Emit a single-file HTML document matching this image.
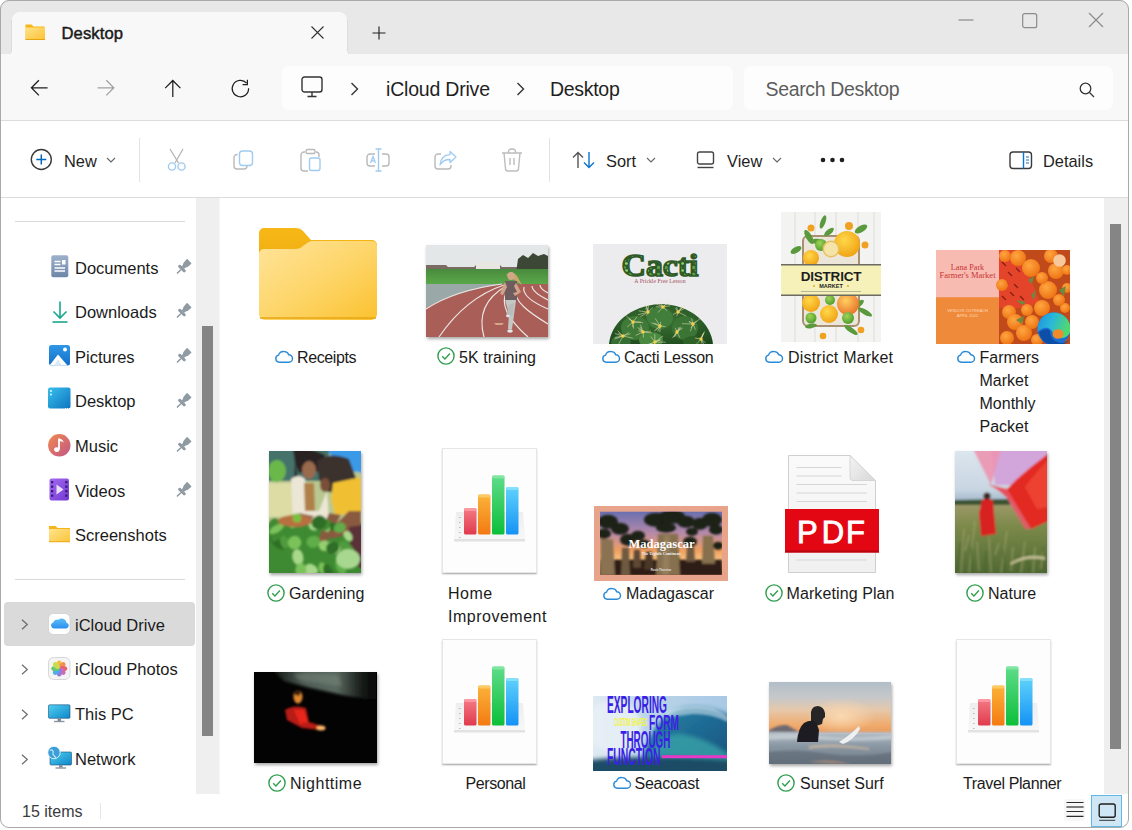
<!DOCTYPE html>
<html><head><meta charset="utf-8">
<style>
html,body{margin:0;padding:0;background:#fff;width:1132px;height:830px;overflow:hidden}
*{box-sizing:border-box}
body{font-family:"Liberation Sans",sans-serif;color:#1b1b1b;position:relative}
.a{position:absolute}
.t{position:absolute;white-space:nowrap;line-height:1}
svg{position:absolute;overflow:visible}
#win{position:absolute;left:0;top:0;width:1129px;height:828px;border-radius:9px;overflow:hidden;background:#fff}
#frame{position:absolute;left:0;top:0;width:1129px;height:828px;border:1px solid #a9a9a9;border-radius:9px;pointer-events:none}
.lbl{position:absolute;font-size:16px;line-height:23px;white-space:nowrap;color:#1b1b1b}
.sb{position:absolute;font-size:16.5px;line-height:1;white-space:nowrap;color:#1b1b1b;left:75px}
.thumb{position:absolute;overflow:hidden}
.shadow{box-shadow:1px 2px 3px rgba(0,0,0,.35)}
</style></head><body>
<div id="win">
<!-- ============ TITLE BAR ============ -->
<div class="a" style="left:0px;top:0px;width:1129px;height:55px;background:#f8f8f8"></div>
<div class="a" style="left:0px;top:0px;width:1129px;height:22px;background:#e8e8e8"></div>
<div class="a" style="left:0px;top:20px;width:12px;height:35px;background:#e8e8e8;border-right:1px solid #dcdcdc;border-bottom:1px solid #dadada;border-bottom-right-radius:5px"></div>
<div class="a" style="left:347px;top:20px;width:782px;height:35px;background:#e8e8e8;border-left:1px solid #dcdcdc;border-bottom:1px solid #dadada;border-bottom-left-radius:5px"></div>
<div class="a" style="left:12px;top:12px;width:335px;height:43px;background:#f8f8f8;border-radius:8px 8px 0 0"></div>
<!-- tab folder icon -->
<svg style="left:24px;top:23px" width="22" height="18" viewBox="0 0 22 18">
 <defs><linearGradient id="tf" x1="0" y1="0" x2="1" y2="1"><stop offset="0" stop-color="#ffe28a"/><stop offset="1" stop-color="#fcc235"/></linearGradient></defs>
 <path d="M1.5 1.5h6l2 2h11v13h-19z" fill="#f6b716"/>
 <rect x="1.5" y="4.5" width="19.5" height="12" rx="1" fill="url(#tf)"/>
 <rect x="1.5" y="16" width="19.5" height="1" fill="#e8a40c"/>
</svg>
<div class="t" style="left:61.5px;top:26px;font-size:16.6px;-webkit-text-stroke:0.45px #1a1a1a;color:#1a1a1a;letter-spacing:0.1px">Desktop</div>
<!-- tab close -->
<svg style="left:311px;top:26px" width="13" height="13"><path d="M0.5 0.5L12.5 12.5M12.5 0.5L0.5 12.5" stroke="#333" stroke-width="1.1"/></svg>
<!-- plus -->
<svg style="left:372px;top:26px" width="14" height="14"><path d="M7 0.5V13.5M0.5 7H13.5" stroke="#222" stroke-width="1.15"/></svg>
<!-- window controls -->
<svg style="left:958px;top:19px" width="16" height="2"><path d="M0.5 1H15.5" stroke="#8b8b8b" stroke-width="1.2"/></svg>
<svg style="left:1022px;top:13px" width="16" height="16"><rect x="0.7" y="0.7" width="14" height="14" rx="2" fill="none" stroke="#8b8b8b" stroke-width="1.2"/></svg>
<svg style="left:1088px;top:12px" width="16" height="16"><path d="M1 1L15 15M15 1L1 15" stroke="#8b8b8b" stroke-width="1.2"/></svg>

<!-- ============ ADDRESS ROW ============ -->
<div class="a" style="left:0px;top:54px;width:1129px;height:66px;background:#f8f8f8"></div>
<svg style="left:30px;top:79px" width="19" height="18" viewBox="0 0 19 18"><path d="M17.6 8.8H1.4M8.9 1.2L1.4 8.8L8.9 16.4" fill="none" stroke="#1f1f1f" stroke-width="1.25"/></svg>
<svg style="left:97px;top:79px" width="19" height="18" viewBox="0 0 19 18"><path d="M0.6 8.8H16.8M9.3 1.2L16.8 8.8L9.3 16.4" fill="none" stroke="#a0a0a0" stroke-width="1.25"/></svg>
<svg style="left:164px;top:79px" width="19" height="19" viewBox="0 0 19 19"><path d="M8.8 18V1.5M1.2 9.1L8.8 1.5L16.4 9.1" fill="none" stroke="#1f1f1f" stroke-width="1.25"/></svg>
<svg style="left:231px;top:79px" width="19" height="19" viewBox="0 0 19 19"><path d="M15.6 4.2A8.2 8.2 0 1 0 17.6 9.2" fill="none" stroke="#1f1f1f" stroke-width="1.25"/><path d="M11.6 5.6H16.4V0.8" fill="none" stroke="#1f1f1f" stroke-width="1.25"/></svg>
<div class="a" style="left:282px;top:66px;width:451px;height:44px;background:#fdfdfd;border-radius:7px"></div>
<svg style="left:301px;top:76px" width="22" height="22" viewBox="0 0 22 22"><rect x="1" y="1" width="20" height="15" rx="2.5" fill="none" stroke="#333" stroke-width="1.4"/><path d="M11 16v4M6.5 20.5h9" stroke="#333" stroke-width="1.4"/></svg>
<svg style="left:350px;top:82px" width="9" height="14" viewBox="0 0 9 14"><path d="M1.5 1L7.5 7L1.5 13" fill="none" stroke="#333" stroke-width="1.4"/></svg>
<div class="t" style="left:386px;top:80.2px;font-size:19.5px;color:#1f1f1f;letter-spacing:-0.2px">iCloud Drive</div>
<svg style="left:516px;top:82px" width="9" height="14" viewBox="0 0 9 14"><path d="M1.5 1L7.5 7L1.5 13" fill="none" stroke="#333" stroke-width="1.4"/></svg>
<div class="t" style="left:550px;top:80.2px;font-size:19.5px;color:#1f1f1f;letter-spacing:-0.3px">Desktop</div>
<div class="a" style="left:744px;top:66px;width:369px;height:44px;background:#fdfdfd;border-radius:7px"></div>
<div class="t" style="left:765.5px;top:80.3px;font-size:19.5px;color:#5d5d5d;letter-spacing:-0.35px">Search Desktop</div>
<svg style="left:1079px;top:82px" width="16" height="16" viewBox="0 0 16 16"><circle cx="6.5" cy="6.5" r="5.3" fill="none" stroke="#333" stroke-width="1.3"/><path d="M10.5 10.5L15 15" stroke="#333" stroke-width="1.3"/></svg>

<!-- ============ COMMAND BAR ============ -->
<div class="a" style="left:0px;top:120px;width:1129px;height:1px;background:#dcdcdc"></div>
<div class="a" style="left:0px;top:121px;width:1129px;height:76px;background:#ffffff"></div>
<div class="a" style="left:0px;top:197px;width:1129px;height:1px;background:#dcdcdc"></div>
<svg style="left:30px;top:148px" width="23" height="23" viewBox="0 0 23 23"><circle cx="11.3" cy="11.5" r="10" fill="none" stroke="#3a3a3a" stroke-width="1.4"/><path d="M11.3 6.5v10M6.3 11.5h10" stroke="#0067c0" stroke-width="1.5"/></svg>
<div class="t" style="left:64px;top:152.6px;font-size:16.4px;color:#1f1f1f">New</div>
<svg style="left:106px;top:157px" width="10" height="6" viewBox="0 0 10 6"><path d="M1 1L5 5L9 1" fill="none" stroke="#666" stroke-width="1.1"/></svg>
<div class="a" style="left:139px;top:138px;width:1px;height:44px;background:#e3e3e3"></div>
<!-- scissors -->
<svg style="left:166px;top:148px" width="22" height="24" viewBox="0 0 22 24"><path d="M4 1L12.5 15M17 1L9 15" stroke="#b5b5b5" stroke-width="1.3" fill="none"/><circle cx="6" cy="18.5" r="3.6" fill="none" stroke="#9fcbf0" stroke-width="1.4"/><circle cx="15.5" cy="18.5" r="3.6" fill="none" stroke="#9fcbf0" stroke-width="1.4"/></svg>
<!-- copy -->
<svg style="left:233px;top:150px" width="22" height="22" viewBox="0 0 22 22"><path d="M4.5 4.5H4A3 3 0 0 0 1 7.5V16A3 3 0 0 0 4 19H11A3 3 0 0 0 14 16" fill="none" stroke="#b9b9b9" stroke-width="1.4"/><rect x="6.5" y="1" width="13" height="14.5" rx="3" fill="none" stroke="#9fcbf0" stroke-width="1.4"/></svg>
<!-- paste -->
<svg style="left:300px;top:148px" width="22" height="24" viewBox="0 0 22 24"><path d="M5 4H4A3 3 0 0 0 1 7V20A3 3 0 0 0 4 23H8" fill="none" stroke="#b9b9b9" stroke-width="1.4"/><path d="M16 4H16A3 3 0 0 1 19 7V9" fill="none" stroke="#b9b9b9" stroke-width="1.4"/><rect x="6" y="1.5" width="9" height="4" rx="1.5" fill="none" stroke="#b9b9b9" stroke-width="1.4"/><rect x="9.5" y="10" width="10.5" height="12.5" rx="2" fill="none" stroke="#9fcbf0" stroke-width="1.4"/></svg>
<!-- rename -->
<svg style="left:366px;top:148px" width="24" height="24" viewBox="0 0 24 24"><path d="M9 6H4A3 3 0 0 0 1 9V15A3 3 0 0 0 4 18H9M16 6H20A3 3 0 0 1 23 9V15A3 3 0 0 1 20 18H16" fill="none" stroke="#b9b9b9" stroke-width="1.4"/><path d="M12.5 1V23M9.5 1H15.5M9.5 23H15.5" stroke="#9fcbf0" stroke-width="1.4"/><path d="M4.5 15L7 8.5L9.5 15M5.3 12.8H8.7" fill="none" stroke="#9fcbf0" stroke-width="1.3"/></svg>
<!-- share -->
<svg style="left:434px;top:150px" width="24" height="22" viewBox="0 0 24 22"><path d="M7 4H4A3 3 0 0 0 1 7V16A3 3 0 0 0 4 19H14A3 3 0 0 0 17 16V15" fill="none" stroke="#b9b9b9" stroke-width="1.4"/><path d="M16 1.5L22 7L16 12.5V9.5C11 9.5 8 11 6 15C6.5 9 10 5 16 4.7Z" fill="none" stroke="#9fcbf0" stroke-width="1.3" stroke-linejoin="round"/></svg>
<!-- delete -->
<svg style="left:501px;top:148px" width="22" height="24" viewBox="0 0 22 24"><path d="M1 5H21M7.5 5V3.5A2.5 2.5 0 0 1 10 1H12A2.5 2.5 0 0 1 14.5 3.5V5M3 5L4.5 20.5A2.5 2.5 0 0 0 7 23H15A2.5 2.5 0 0 0 17.5 20.5L19 5M9 10V17M13 10V17" fill="none" stroke="#bdbdbd" stroke-width="1.4"/></svg>
<div class="a" style="left:549px;top:138px;width:1px;height:44px;background:#e3e3e3"></div>
<!-- sort -->
<svg style="left:572px;top:151px" width="24" height="18" viewBox="0 0 24 18"><path d="M6 17V1.5M1 6.5L6 1.5L11 6.5" fill="none" stroke="#555" stroke-width="1.4"/><path d="M17 1V16.5M12 11.5L17 16.5L22 11.5" fill="none" stroke="#0a74d0" stroke-width="1.4"/></svg>
<div class="t" style="left:606px;top:152.6px;font-size:16.4px;color:#1f1f1f">Sort</div>
<svg style="left:646px;top:157px" width="10" height="6" viewBox="0 0 10 6"><path d="M1 1L5 5L9 1" fill="none" stroke="#666" stroke-width="1.1"/></svg>
<!-- view -->
<svg style="left:696px;top:151px" width="20" height="18" viewBox="0 0 20 18"><rect x="1.5" y="1" width="16" height="12" rx="2" fill="none" stroke="#444" stroke-width="1.4"/><path d="M1.5 16.5H17.5" stroke="#444" stroke-width="1.4"/></svg>
<div class="t" style="left:727px;top:152.6px;font-size:16.4px;color:#1f1f1f">View</div>
<svg style="left:772px;top:157px" width="10" height="6" viewBox="0 0 10 6"><path d="M1 1L5 5L9 1" fill="none" stroke="#666" stroke-width="1.1"/></svg>
<svg style="left:820px;top:157px" width="26" height="6" viewBox="0 0 26 6"><circle cx="3" cy="3" r="2.3" fill="#1f1f1f"/><circle cx="12.5" cy="3" r="2.3" fill="#1f1f1f"/><circle cx="22" cy="3" r="2.3" fill="#1f1f1f"/></svg>
<!-- details -->
<svg style="left:1009px;top:151px" width="24" height="19" viewBox="0 0 24 19"><rect x="1" y="1" width="21.5" height="16.5" rx="3" fill="none" stroke="#3a3a3a" stroke-width="1.4"/><path d="M14.5 1V17.5" stroke="#0a74d0" stroke-width="1.4"/><path d="M17 6H20M17 9H20M17 12H20" stroke="#0a74d0" stroke-width="1.2"/></svg>
<div class="t" style="left:1043px;top:152.6px;font-size:16.4px;color:#1f1f1f">Details</div>

<!-- ============ SIDEBAR ============ -->
<div class="a" style="left:-1px;top:198px;width:222px;height:597px;background:#fff"></div>
<div class="a" style="left:15px;top:221px;width:170px;height:1px;background:#d9d9d9"></div>
<!-- Documents -->
<svg style="left:51px;top:255px" width="18" height="23" viewBox="0 0 18 23"><defs><linearGradient id="dg" x1="0" y1="0" x2="0" y2="1"><stop offset="0" stop-color="#9db1cb"/><stop offset="1" stop-color="#6e87a7"/></linearGradient></defs><rect x="0.3" y="0.3" width="17" height="22" rx="2" fill="url(#dg)"/><path d="M3.5 6.5H9.5M3.5 9.5H9.5M3.5 13H14M3.5 16H14" stroke="#fff" stroke-width="1.3"/><rect x="11" y="5" width="3.5" height="4.5" fill="#fff"/></svg>
<div class="sb" style="top:259.5px">Documents</div>
<!-- Downloads -->
<svg style="left:52px;top:301px" width="16" height="22" viewBox="0 0 16 22"><path d="M8 0.5V17M1.5 10.5L8 17L14.5 10.5" fill="none" stroke="#17a88f" stroke-width="1.6"/><path d="M0.5 21H15.5" stroke="#17a88f" stroke-width="1.6"/></svg>
<div class="sb" style="top:303.8px">Downloads</div>
<!-- Pictures -->
<svg style="left:49px;top:345px" width="22" height="21" viewBox="0 0 22 21"><defs><linearGradient id="pg" x1="0" y1="0" x2="0" y2="1"><stop offset="0" stop-color="#2e97e6"/><stop offset="1" stop-color="#1470c9"/></linearGradient></defs><rect x="0" y="0" width="21" height="20.5" rx="2.5" fill="url(#pg)"/><path d="M0.5 20.5L9 9.5L18.5 20.5Z" fill="#fff"/><path d="M5 20.5L9 14.5L13 20.5Z" fill="#dce9f7"/><circle cx="16" cy="4.5" r="2" fill="#fff"/></svg>
<div class="sb" style="top:348.7px">Pictures</div>
<!-- Desktop -->
<svg style="left:48px;top:387px" width="23" height="22" viewBox="0 0 23 22"><defs><linearGradient id="dkg" x1="0" y1="0" x2="1" y2="1"><stop offset="0" stop-color="#39c0ec"/><stop offset="1" stop-color="#0d74bf"/></linearGradient></defs><rect x="0" y="0.5" width="22.5" height="21" rx="2" fill="url(#dkg)"/><circle cx="3" cy="4" r="0.9" fill="#fff"/><circle cx="3" cy="7.5" r="0.9" fill="#fff"/><path d="M17 21.5h5" stroke="#fff" stroke-width="0.8" stroke-dasharray="1 1"/></svg>
<div class="sb" style="top:393.3px">Desktop</div>
<!-- Music -->
<svg style="left:48px;top:434px" width="23" height="23" viewBox="0 0 23 23"><defs><linearGradient id="mg" x1="0" y1="0" x2="1" y2="1"><stop offset="0" stop-color="#f08a4c"/><stop offset="1" stop-color="#c2558a"/></linearGradient></defs><circle cx="11.3" cy="11.3" r="11.2" fill="url(#mg)"/><path d="M11 4.5V15.5" stroke="#fff" stroke-width="1.8"/><path d="M11 4.5C13 5 15.5 6 15.5 8.5C14.5 7.5 12.8 7.2 11 7.3Z" fill="#fff"/><ellipse cx="8.8" cy="15.6" rx="2.7" ry="2.3" fill="#fff"/></svg>
<div class="sb" style="top:438.0px">Music</div>
<!-- Videos -->
<svg style="left:49px;top:478px" width="21" height="23" viewBox="0 0 21 23"><defs><linearGradient id="vg" x1="0" y1="0" x2="1" y2="1"><stop offset="0" stop-color="#a36cf0"/><stop offset="1" stop-color="#7338d3"/></linearGradient></defs><rect x="0.5" y="0.5" width="19.5" height="22" rx="2" fill="url(#vg)"/><g fill="#3b1b7a"><rect x="2" y="3" width="2.3" height="2.3"/><rect x="2" y="7.5" width="2.3" height="2.3"/><rect x="2" y="12" width="2.3" height="2.3"/><rect x="2" y="16.5" width="2.3" height="2.3"/><rect x="16.2" y="3" width="2.3" height="2.3"/><rect x="16.2" y="7.5" width="2.3" height="2.3"/><rect x="16.2" y="12" width="2.3" height="2.3"/><rect x="16.2" y="16.5" width="2.3" height="2.3"/></g><path d="M7.5 6.5L14.5 11.5L7.5 16.5Z" fill="#e9ddff"/></svg>
<div class="sb" style="top:482.7px">Videos</div>
<!-- Screenshots -->
<svg style="left:48px;top:525px" width="23" height="18" viewBox="0 0 23 18"><defs><linearGradient id="sg" x1="0" y1="0" x2="1" y2="1"><stop offset="0" stop-color="#ffe38c"/><stop offset="1" stop-color="#fcc43a"/></linearGradient></defs><path d="M1 1h6.5l2 2H22v14H1z" fill="#f5b51a"/><rect x="1" y="4" width="21" height="13" rx="0.8" fill="url(#sg)"/><rect x="1" y="16.3" width="21" height="0.9" fill="#e6a511"/></svg>
<div class="sb" style="top:527.3px">Screenshots</div>
<!-- pins -->
<svg style="left:174px;top:256.5px" width="20" height="20" viewBox="0 0 20 20"><g transform="translate(9,10.5) rotate(45) scale(0.9)" fill="#8f9aa2"><path d="M-3.6 -9.2Q-3.6 -10 -2.8 -10H2.8Q3.6 -10 3.6 -9.2L3.2 -4.5Q3 -3 2.2 -2.2L1.9 0.2H-1.9L-2.2 -2.2Q-3 -3 -3.2 -4.5Z"/><rect x="-5.2" y="0" width="10.4" height="3.3" rx="1.4"/><rect x="-0.85" y="3" width="1.7" height="6.6" rx="0.85"/></g></svg>
<svg style="left:174px;top:301.2px" width="20" height="20" viewBox="0 0 20 20"><g transform="translate(9,10.5) rotate(45) scale(0.9)" fill="#8f9aa2"><path d="M-3.6 -9.2Q-3.6 -10 -2.8 -10H2.8Q3.6 -10 3.6 -9.2L3.2 -4.5Q3 -3 2.2 -2.2L1.9 0.2H-1.9L-2.2 -2.2Q-3 -3 -3.2 -4.5Z"/><rect x="-5.2" y="0" width="10.4" height="3.3" rx="1.4"/><rect x="-0.85" y="3" width="1.7" height="6.6" rx="0.85"/></g></svg>
<svg style="left:174px;top:345.9px" width="20" height="20" viewBox="0 0 20 20"><g transform="translate(9,10.5) rotate(45) scale(0.9)" fill="#8f9aa2"><path d="M-3.6 -9.2Q-3.6 -10 -2.8 -10H2.8Q3.6 -10 3.6 -9.2L3.2 -4.5Q3 -3 2.2 -2.2L1.9 0.2H-1.9L-2.2 -2.2Q-3 -3 -3.2 -4.5Z"/><rect x="-5.2" y="0" width="10.4" height="3.3" rx="1.4"/><rect x="-0.85" y="3" width="1.7" height="6.6" rx="0.85"/></g></svg>
<svg style="left:174px;top:390.6px" width="20" height="20" viewBox="0 0 20 20"><g transform="translate(9,10.5) rotate(45) scale(0.9)" fill="#8f9aa2"><path d="M-3.6 -9.2Q-3.6 -10 -2.8 -10H2.8Q3.6 -10 3.6 -9.2L3.2 -4.5Q3 -3 2.2 -2.2L1.9 0.2H-1.9L-2.2 -2.2Q-3 -3 -3.2 -4.5Z"/><rect x="-5.2" y="0" width="10.4" height="3.3" rx="1.4"/><rect x="-0.85" y="3" width="1.7" height="6.6" rx="0.85"/></g></svg>
<svg style="left:174px;top:435.3px" width="20" height="20" viewBox="0 0 20 20"><g transform="translate(9,10.5) rotate(45) scale(0.9)" fill="#8f9aa2"><path d="M-3.6 -9.2Q-3.6 -10 -2.8 -10H2.8Q3.6 -10 3.6 -9.2L3.2 -4.5Q3 -3 2.2 -2.2L1.9 0.2H-1.9L-2.2 -2.2Q-3 -3 -3.2 -4.5Z"/><rect x="-5.2" y="0" width="10.4" height="3.3" rx="1.4"/><rect x="-0.85" y="3" width="1.7" height="6.6" rx="0.85"/></g></svg>
<svg style="left:174px;top:480.0px" width="20" height="20" viewBox="0 0 20 20"><g transform="translate(9,10.5) rotate(45) scale(0.9)" fill="#8f9aa2"><path d="M-3.6 -9.2Q-3.6 -10 -2.8 -10H2.8Q3.6 -10 3.6 -9.2L3.2 -4.5Q3 -3 2.2 -2.2L1.9 0.2H-1.9L-2.2 -2.2Q-3 -3 -3.2 -4.5Z"/><rect x="-5.2" y="0" width="10.4" height="3.3" rx="1.4"/><rect x="-0.85" y="3" width="1.7" height="6.6" rx="0.85"/></g></svg>

<div class="a" style="left:15px;top:578.5px;width:170px;height:1px;background:#d9d9d9"></div>
<!-- selected -->
<div class="a" style="left:4px;top:602px;width:190.5px;height:44px;background:#dadada;border-radius:4px"></div>
<svg style="left:21px;top:619px" width="8" height="11" viewBox="0 0 8 11"><path d="M1 0.7L6.3 5.5L1 10.3" fill="none" stroke="#6b6b6b" stroke-width="1.2"/></svg>
<svg style="left:21px;top:664px" width="8" height="11" viewBox="0 0 8 11"><path d="M1 0.7L6.3 5.5L1 10.3" fill="none" stroke="#6b6b6b" stroke-width="1.2"/></svg>
<svg style="left:21px;top:708.5px" width="8" height="11" viewBox="0 0 8 11"><path d="M1 0.7L6.3 5.5L1 10.3" fill="none" stroke="#6b6b6b" stroke-width="1.2"/></svg>
<svg style="left:21px;top:753.5px" width="8" height="11" viewBox="0 0 8 11"><path d="M1 0.7L6.3 5.5L1 10.3" fill="none" stroke="#6b6b6b" stroke-width="1.2"/></svg>

<!-- iCloud Drive icon -->
<svg style="left:48px;top:613px" width="23" height="22" viewBox="0 0 23 22"><rect x="0.5" y="0.5" width="21.5" height="21" rx="5" fill="#fff" stroke="#cfcfcf" stroke-width="0.8"/><defs><linearGradient id="cg" x1="0" y1="0" x2="0" y2="1"><stop offset="0" stop-color="#5cbef7"/><stop offset="1" stop-color="#2b8ff0"/></linearGradient></defs><path d="M6 15.5A3 3 0 0 1 5.3 9.6A4 4 0 0 1 10.5 6.8A4.8 4.8 0 0 1 18.5 9.8A2.9 2.9 0 0 1 17.5 15.5Z" fill="url(#cg)"/></svg>
<div class="sb" style="top:616.8px">iCloud Drive</div>
<!-- iCloud Photos icon -->
<svg style="left:48px;top:657px" width="23" height="23" viewBox="0 0 23 23"><rect x="0.5" y="0.5" width="21.5" height="22" rx="5" fill="#f4f4f4" stroke="#cfcfcf" stroke-width="0.8"/><g transform="translate(11.25,11.5)" opacity="0.88"><ellipse rx="2.6" ry="4" cy="-4" fill="#f9b51c"/><ellipse rx="2.6" ry="4" cy="-4" fill="#f4823b" transform="rotate(45)"/><ellipse rx="2.6" ry="4" cy="-4" fill="#e94c5b" transform="rotate(90)"/><ellipse rx="2.6" ry="4" cy="-4" fill="#c55bb0" transform="rotate(135)"/><ellipse rx="2.6" ry="4" cy="-4" fill="#8a6ad8" transform="rotate(180)"/><ellipse rx="2.6" ry="4" cy="-4" fill="#3aa3e8" transform="rotate(225)"/><ellipse rx="2.6" ry="4" cy="-4" fill="#55c25e" transform="rotate(270)"/><ellipse rx="2.6" ry="4" cy="-4" fill="#c4d83a" transform="rotate(315)"/></g></svg>
<div class="sb" style="top:661.3px">iCloud Photos</div>
<!-- This PC -->
<svg style="left:48px;top:704px" width="23" height="19" viewBox="0 0 23 19"><defs><linearGradient id="pcg" x1="0" y1="0" x2="1" y2="1"><stop offset="0" stop-color="#4fd0f2"/><stop offset="1" stop-color="#0f86c8"/></linearGradient></defs><rect x="0.5" y="0.8" width="21.5" height="13.5" rx="1" fill="url(#pcg)" stroke="#1d4f7a" stroke-width="0.6"/><rect x="9.5" y="14.5" width="3.5" height="2.5" fill="#7c8a96"/><rect x="6" y="16.8" width="10.5" height="1.4" fill="#8a97a2"/></svg>
<div class="sb" style="top:706.3px">This PC</div>
<!-- Network -->
<svg style="left:47px;top:746px" width="25" height="24" viewBox="0 0 25 24"><defs><linearGradient id="ng" x1="0" y1="0" x2="1" y2="1"><stop offset="0" stop-color="#4fd0f2"/><stop offset="1" stop-color="#0f86c8"/></linearGradient></defs><rect x="3" y="6" width="21.5" height="13" rx="1" fill="url(#ng)" stroke="#1d4f7a" stroke-width="0.6"/><rect x="12" y="19.2" width="3.5" height="2.3" fill="#7c8a96"/><rect x="8.5" y="21.3" width="10.5" height="1.4" fill="#8a97a2"/><circle cx="7" cy="6.5" r="6.2" fill="#3d9fd8" stroke="#fff" stroke-width="0.8"/><path d="M3 4.5C5 3 7 5 6 7C5 9 8 10 9 12" fill="none" stroke="#bfe6fb" stroke-width="1.2"/></svg>
<div class="sb" style="top:751.3px">Network</div>
<!-- sidebar scrollbar -->
<div class="a" style="left:196px;top:198px;width:23px;height:596px;background:#efefef"></div>
<div class="a" style="left:202px;top:325.5px;width:10.5px;height:410px;background:#858585"></div>
<div class="a" style="left:219px;top:198px;width:2px;height:597px;background:#f6f6f6"></div>

<!-- ============ CONTENT ============ -->
<div class="a" style="left:220px;top:198px;width:886px;height:597px;background:#fff"></div>
<div class="a" style="left:1104px;top:198px;width:24px;height:596px;background:#efefef"></div>
<div class="a" style="left:1110px;top:223.5px;width:11px;height:525px;background:#858585"></div>
<svg style="left:274.5px;top:349.6px" width="18" height="13" viewBox="0 0 18 13"><path d="M4.2 12.2A3.6 3.6 0 0 1 3.6 5.1A4.6 4.6 0 0 1 9.3 1.6A4.4 4.4 0 0 1 13.7 4.8A3.7 3.7 0 0 1 13.9 12.2Z" fill="none" stroke="#2b8ad6" stroke-width="1.4" stroke-linejoin="round"/></svg>
<div class="lbl" style="left:297px;top:345.55px;letter-spacing:-0.4px">Receipts</div>
<svg style="left:436.5px;top:347.1px" width="18" height="18" viewBox="0 0 18 18"><circle cx="9" cy="9" r="8.1" fill="none" stroke="#2f9e4f" stroke-width="1.4"/><path d="M5.2 9.3L7.9 11.9L12.9 6.6" fill="none" stroke="#2f9e4f" stroke-width="1.4"/></svg>
<div class="lbl" style="left:459px;top:345.55px;letter-spacing:0.05px">5K training</div>
<svg style="left:602px;top:349.6px" width="18" height="13" viewBox="0 0 18 13"><path d="M4.2 12.2A3.6 3.6 0 0 1 3.6 5.1A4.6 4.6 0 0 1 9.3 1.6A4.4 4.4 0 0 1 13.7 4.8A3.7 3.7 0 0 1 13.9 12.2Z" fill="none" stroke="#2b8ad6" stroke-width="1.4" stroke-linejoin="round"/></svg>
<div class="lbl" style="left:624px;top:345.55px;letter-spacing:-0.25px">Cacti Lesson</div>
<svg style="left:765px;top:349.6px" width="18" height="13" viewBox="0 0 18 13"><path d="M4.2 12.2A3.6 3.6 0 0 1 3.6 5.1A4.6 4.6 0 0 1 9.3 1.6A4.4 4.4 0 0 1 13.7 4.8A3.7 3.7 0 0 1 13.9 12.2Z" fill="none" stroke="#2b8ad6" stroke-width="1.4" stroke-linejoin="round"/></svg>
<div class="lbl" style="left:788px;top:345.55px;letter-spacing:0.2px">District Market</div>
<svg style="left:957px;top:349.6px" width="18" height="13" viewBox="0 0 18 13"><path d="M4.2 12.2A3.6 3.6 0 0 1 3.6 5.1A4.6 4.6 0 0 1 9.3 1.6A4.4 4.4 0 0 1 13.7 4.8A3.7 3.7 0 0 1 13.9 12.2Z" fill="none" stroke="#2b8ad6" stroke-width="1.4" stroke-linejoin="round"/></svg>
<div class="lbl" style="left:979.5px;top:345.55px;letter-spacing:0px">Farmers<br>Market<br>Monthly<br>Packet</div>
<svg style="left:266.5px;top:584.0px" width="18" height="18" viewBox="0 0 18 18"><circle cx="9" cy="9" r="8.1" fill="none" stroke="#2f9e4f" stroke-width="1.4"/><path d="M5.2 9.3L7.9 11.9L12.9 6.6" fill="none" stroke="#2f9e4f" stroke-width="1.4"/></svg>
<div class="lbl" style="left:289px;top:582.45px;letter-spacing:0.08px">Gardening</div>
<div class="lbl" style="left:448px;top:582.45px;letter-spacing:0.5px">Home<br>Improvement</div>
<svg style="left:603px;top:586.5px" width="18" height="13" viewBox="0 0 18 13"><path d="M4.2 12.2A3.6 3.6 0 0 1 3.6 5.1A4.6 4.6 0 0 1 9.3 1.6A4.4 4.4 0 0 1 13.7 4.8A3.7 3.7 0 0 1 13.9 12.2Z" fill="none" stroke="#2b8ad6" stroke-width="1.4" stroke-linejoin="round"/></svg>
<div class="lbl" style="left:626px;top:582.45px;letter-spacing:0px">Madagascar</div>
<svg style="left:764.5px;top:584.0px" width="18" height="18" viewBox="0 0 18 18"><circle cx="9" cy="9" r="8.1" fill="none" stroke="#2f9e4f" stroke-width="1.4"/><path d="M5.2 9.3L7.9 11.9L12.9 6.6" fill="none" stroke="#2f9e4f" stroke-width="1.4"/></svg>
<div class="lbl" style="left:786.5px;top:582.45px;letter-spacing:0.1px">Marketing Plan</div>
<svg style="left:965.5px;top:584.0px" width="18" height="18" viewBox="0 0 18 18"><circle cx="9" cy="9" r="8.1" fill="none" stroke="#2f9e4f" stroke-width="1.4"/><path d="M5.2 9.3L7.9 11.9L12.9 6.6" fill="none" stroke="#2f9e4f" stroke-width="1.4"/></svg>
<div class="lbl" style="left:988px;top:582.45px;letter-spacing:0px">Nature</div>
<svg style="left:268.0px;top:773.9px" width="18" height="18" viewBox="0 0 18 18"><circle cx="9" cy="9" r="8.1" fill="none" stroke="#2f9e4f" stroke-width="1.4"/><path d="M5.2 9.3L7.9 11.9L12.9 6.6" fill="none" stroke="#2f9e4f" stroke-width="1.4"/></svg>
<div class="lbl" style="left:290px;top:772.35px;letter-spacing:0.5px">Nighttime</div>
<div class="lbl" style="left:465.5px;top:772.35px;letter-spacing:-0.4px">Personal</div>
<svg style="left:612.5px;top:776.4px" width="18" height="13" viewBox="0 0 18 13"><path d="M4.2 12.2A3.6 3.6 0 0 1 3.6 5.1A4.6 4.6 0 0 1 9.3 1.6A4.4 4.4 0 0 1 13.7 4.8A3.7 3.7 0 0 1 13.9 12.2Z" fill="none" stroke="#2b8ad6" stroke-width="1.4" stroke-linejoin="round"/></svg>
<div class="lbl" style="left:634.5px;top:772.35px;letter-spacing:-0.25px">Seacoast</div>
<svg style="left:777.0px;top:773.9px" width="18" height="18" viewBox="0 0 18 18"><circle cx="9" cy="9" r="8.1" fill="none" stroke="#2f9e4f" stroke-width="1.4"/><path d="M5.2 9.3L7.9 11.9L12.9 6.6" fill="none" stroke="#2f9e4f" stroke-width="1.4"/></svg>
<div class="lbl" style="left:800px;top:772.35px;letter-spacing:0px">Sunset Surf</div>
<div class="lbl" style="left:963px;top:772.35px;letter-spacing:-0.38px">Travel Planner</div>
<svg style="left:259px;top:228px" width="118" height="93" viewBox="0 0 118 93">
<defs><linearGradient id="fb" x1="0" y1="0" x2="1" y2="1"><stop offset="0" stop-color="#ffe49a"/><stop offset="0.55" stop-color="#fdd466"/><stop offset="1" stop-color="#fbc22f"/></linearGradient>
<linearGradient id="ft" x1="0" y1="0" x2="0" y2="1"><stop offset="0" stop-color="#f7b817"/><stop offset="1" stop-color="#eaa60d"/></linearGradient></defs>
<path d="M0 5A5 5 0 0 1 5 0H36C40 0 42 1 44 3L52 12H113A5 5 0 0 1 118 17V60H0Z" fill="url(#ft)"/>
<path d="M0 26A5 5 0 0 1 5 21H36C40 21 42 20 44 18L49 14.5C50.5 13.5 52 13 54 13H113A5 5 0 0 1 118 18V86A6 6 0 0 1 112 92H6A6 6 0 0 1 0 86Z" fill="url(#fb)"/>
<path d="M1 90H117" stroke="#e6a614" stroke-width="1.6"/>
</svg>
<div class="thumb shadow" style="left:426px;top:245px;width:122px;height:92px">
<svg style="left:0;top:0" width="122" height="92" viewBox="0 0 122 92">
<defs><filter id="bl1"><feGaussianBlur stdDeviation="0.7"/></filter><filter id="bl1b"><feGaussianBlur stdDeviation="0.35"/></filter>
<linearGradient id="grs" x1="0" y1="0" x2="0" y2="1"><stop offset="0" stop-color="#4a8a3e"/><stop offset="1" stop-color="#5aa848"/></linearGradient></defs>
<rect width="122" height="92" fill="#aa5e58"/>
<g filter="url(#bl1)">
<rect x="-2" y="-2" width="126" height="24" fill="#e4e7e8"/>
<path d="M0 20H20L22 22H48L50 20H74L76 22H92V27H0Z" fill="#7a6c62"/>
<rect x="50" y="17" width="24" height="7" fill="#e8e6e0"/>
<path d="M90 28L92 14L97 10L102 13L107 8L112 11L118 9L124 12V30Z" fill="#3e4636"/>
<rect x="-2" y="24" width="126" height="15" fill="url(#grs)"/>
<path d="M0 39H76C45 44 20 52 0 63Z" fill="#9aa8a7"/>
</g>
<g fill="none" stroke="#ece6e2" stroke-width="1.2" filter="url(#bl1b)">
<path d="M0 64C20 51 45 43 76 39"/>
<path d="M13 92C28 70 48 50 78 40"/>
<path d="M58 92C53 74 56 55 80 41"/>
<path d="M102 92C84 76 70 58 84 42"/>
<path d="M122 79C104 68 86 56 90 43"/>
<path d="M122 64C108 58 96 50 98 42"/>
<path d="M122 55C114 51 106 46 106 41"/>
<path d="M122 48C118 46 114 43 114 40"/>
</g>
<g filter="url(#bl1b)">
<path d="M80 30Q85 24 91 31L96 40L90 36Z" fill="#c9a56f"/>
<ellipse cx="85" cy="31" rx="3.5" ry="4" fill="#d0a888"/>
<path d="M79 36L91 36L91 56L79 56Z" fill="#6e5c5f"/>
<path d="M79 37L74 49L77 50L81 42Z" fill="#cfa488"/>
<path d="M90 38L95 47L89 51L87 48L91 47L88 41Z" fill="#cfa488"/>
<path d="M79 55L90 55L88 70L86 84L82 84L83 69Z" fill="#c3c7c5"/>
<path d="M88 58L87 70L83 72L80 71L83 60Z" fill="#b8bcba"/>
<ellipse cx="84" cy="86" rx="2.8" ry="1.8" fill="#e4e8ee"/>
<ellipse cx="82" cy="71" rx="1.8" ry="1.3" fill="#e4e8ee"/>
<path d="M68 78L78 78L76 80L70 80Z" fill="#e8c49a" opacity="0.7"/>
</g>
</svg></div>
<div class="thumb" style="left:593px;top:244px;width:134px;height:100px;background:#ececef">
<svg style="left:0;top:0" width="134" height="100" viewBox="0 0 134 100">
<defs><radialGradient id="cac" cx="0.5" cy="0.4" r="0.7"><stop offset="0" stop-color="#3a7234"/><stop offset="1" stop-color="#1f4a1e"/></radialGradient>
<filter id="bl2"><feGaussianBlur stdDeviation="0.7"/></filter>
<pattern id="leafp" width="7" height="7" patternUnits="userSpaceOnUse"><rect width="7" height="7" fill="#2d5a26"/><ellipse cx="2.5" cy="2.5" rx="2.6" ry="1.8" fill="#5e9e48"/><ellipse cx="5.5" cy="5.5" rx="1.8" ry="1.3" fill="#9ccf6a"/></pattern></defs>
<text x="67" y="32" text-anchor="middle" font-family="Liberation Serif" font-weight="bold" font-size="31" fill="url(#leafp)" stroke="#2f5a28" stroke-width="1.6" textLength="77" lengthAdjust="spacingAndGlyphs">Cacti</text>
<text x="67" y="38.8" text-anchor="middle" font-family="Liberation Serif" font-size="5.8" fill="#a4525c">A Prickle Free Lesson</text>
<g filter="url(#bl2)">
<path d="M16 100C18 80 36 62 67 60C98 60 118 80 120 100Z" fill="url(#cac)"/>
<ellipse cx="42" cy="84" rx="14" ry="12" fill="#3f7a38"/>
<ellipse cx="67" cy="74" rx="13" ry="11" fill="#427e3a"/>
<ellipse cx="92" cy="84" rx="13" ry="12" fill="#3a7434"/>
<ellipse cx="58" cy="96" rx="12" ry="8" fill="#4a8a40"/>
<ellipse cx="100" cy="98" rx="10" ry="6" fill="#2e6228"/>
<ellipse cx="28" cy="98" rx="10" ry="7" fill="#356e30"/>
</g>
<path d="M40 78L40.6 84.6M40 78L34.1 83.0M40 78L36.2 74.9M40 78L50.0 78.7M40 78L39.6 83.1M40 78L47.8 77.8M40 78L44.1 72.6M40 78L36.2 74.4M40 78L33.2 71.9M55 68L45.7 66.9M55 68L52.4 64.2M55 68L55.4 61.2M55 68L53.4 71.9M55 68L60.2 63.3M55 68L53.0 59.9M55 68L52.6 59.8M55 68L47.3 72.8M55 68L45.0 70.9M70 63L74.0 59.9M70 63L74.1 66.8M70 63L77.4 61.7M70 63L65.2 59.1M70 63L62.7 62.7M70 63L65.0 68.5M70 63L61.0 58.8M70 63L65.6 55.3M70 63L76.8 56.1M85 68L82.2 63.8M85 68L91.9 61.4M85 68L92.0 64.2M85 68L83.6 63.1M85 68L89.1 62.1M85 68L83.8 72.2M85 68L91.6 61.0M85 68L93.3 72.1M85 68L80.0 70.5M100 80L97.4 87.4M100 80L103.7 77.0M100 80L96.0 77.2M100 80L98.6 74.5M100 80L108.0 74.1M100 80L89.0 79.7M100 80L98.0 84.1M100 80L95.8 77.6M100 80L102.4 85.6M30 92L25.4 89.0M30 92L39.8 94.2M30 92L25.8 99.9M30 92L35.8 88.5M30 92L22.1 93.6M30 92L24.7 86.6M30 92L21.9 89.5M30 92L37.5 89.7M30 92L21.5 95.1M50 88L50.5 93.4M50 88L58.0 87.1M50 88L45.2 86.8M50 88L42.7 91.4M50 88L58.6 88.9M50 88L46.4 84.8M50 88L44.6 83.5M50 88L46.9 82.9M50 88L47.5 80.7M67 82L72.3 82.6M67 82L62.2 74.3M67 82L66.9 88.2M67 82L61.2 79.0M67 82L62.5 86.2M67 82L61.2 87.0M67 82L64.7 87.5M67 82L67.7 77.9M67 82L58.5 78.8M84 88L81.7 92.7M84 88L86.1 83.1M84 88L86.9 93.6M84 88L82.2 83.7M84 88L80.9 93.0M84 88L87.8 82.7M84 88L87.7 84.2M84 88L79.4 94.1M84 88L89.8 83.9M108 95L108.9 99.5M108 95L102.0 94.1M108 95L111.5 87.5M108 95L110.7 99.9M108 95L111.1 88.4M108 95L110.4 89.7M108 95L112.6 98.9M108 95L109.8 89.9M108 95L103.7 99.9M62 98L55.5 100.9M62 98L67.2 95.7M62 98L72.7 98.2M62 98L70.0 92.0M62 98L52.2 101.4M62 98L67.7 95.8M62 98L61.7 90.0M62 98L57.8 92.5M62 98L60.3 103.5" stroke="#efe6b8" stroke-width="0.55" fill="none" opacity="0.95"/>
<g fill="#f2d04a">
<circle cx="40" cy="78" r="1.7"/><circle cx="55" cy="68" r="1.7"/><circle cx="70" cy="63" r="1.7"/><circle cx="85" cy="68" r="1.7"/><circle cx="100" cy="80" r="1.7"/><circle cx="30" cy="92" r="1.7"/><circle cx="50" cy="88" r="1.7"/><circle cx="67" cy="82" r="1.7"/><circle cx="84" cy="88" r="1.7"/><circle cx="108" cy="95" r="1.7"/><circle cx="62" cy="98" r="1.7"/>
</g>
</svg></div>
<div class="thumb" style="left:781px;top:212px;width:100px;height:130px;background:#f3f3f2">
<svg style="left:0;top:0" width="100" height="130" viewBox="0 0 100 130">
<defs><filter id="bl3"><feGaussianBlur stdDeviation="0.55"/></filter>
<radialGradient id="lem" cx="0.4" cy="0.35" r="0.7"><stop offset="0" stop-color="#ffd84a"/><stop offset="1" stop-color="#f0a012"/></radialGradient>
<radialGradient id="lim" cx="0.4" cy="0.35" r="0.7"><stop offset="0" stop-color="#9fd356"/><stop offset="1" stop-color="#4a9a2a"/></radialGradient>
<radialGradient id="mng" cx="0.4" cy="0.35" r="0.7"><stop offset="0" stop-color="#ffd060"/><stop offset="1" stop-color="#e8702a"/></radialGradient></defs>
<rect width="100" height="130" fill="#f3f3f2"/>
<g stroke="#d4d4d4" stroke-width="0.7"><path d="M14 0V130M34 0V130M55 0V130M77 0V130M93 0V130"/></g>
<g filter="url(#bl3)">
<rect x="22" y="24" width="56" height="90" rx="5" fill="#ece6da" stroke="#a89070" stroke-width="2"/>
<g fill="#5a9a3c">
<ellipse cx="15" cy="38" rx="6" ry="3" transform="rotate(-30 15 38)"/>
<ellipse cx="42" cy="10" rx="7" ry="2.5" transform="rotate(-70 42 10)"/>
<ellipse cx="80" cy="17" rx="7" ry="3.2" transform="rotate(-30 80 17)"/>
<ellipse cx="28" cy="25" rx="8" ry="3" transform="rotate(60 28 25)"/>
<ellipse cx="38" cy="30" rx="8" ry="3" transform="rotate(10 38 30)"/>
<ellipse cx="48" cy="20" rx="6" ry="2.5" transform="rotate(-40 48 20)"/>
<ellipse cx="84" cy="100" rx="8" ry="2.5" transform="rotate(30 84 100)"/>
<ellipse cx="78" cy="92" rx="6" ry="2.5" transform="rotate(-40 78 92)"/>
<ellipse cx="30" cy="114" rx="6" ry="2.3" transform="rotate(-10 30 114)"/>
<ellipse cx="70" cy="118" rx="8" ry="2.5" transform="rotate(35 70 118)"/>
</g>
<circle cx="40" cy="33" r="6" fill="url(#lim)"/>
<circle cx="66" cy="32" r="13" fill="url(#lem)"/>
<circle cx="50" cy="37" r="8.5" fill="#e8c060"/><circle cx="50" cy="37" r="7" fill="#f4e4a8"/>
<circle cx="30" cy="46" r="8" fill="url(#lem)"/>
<circle cx="30" cy="16" r="3.5" fill="#f0a020"/>
<circle cx="68" cy="14" r="4" fill="#f0a020"/>
<circle cx="84" cy="33" r="3.5" fill="#f0a020"/>
<circle cx="30" cy="91" r="9" fill="url(#lem)"/>
<circle cx="67" cy="92" r="11" fill="url(#mng)"/>
<circle cx="48" cy="102" r="9" fill="url(#lem)"/>
<circle cx="30" cy="106" r="5.5" fill="url(#lim)"/>
<circle cx="67" cy="106" r="6" fill="url(#lim)"/>
<circle cx="49" cy="88" r="5" fill="url(#lim)"/>
<circle cx="80" cy="118" r="3.3" fill="#f0a020"/>
<circle cx="42" cy="124" r="3.3" fill="#f0a020"/>
</g>
<rect x="0" y="52" width="100" height="32" fill="#f6f1b8"/>
<rect x="0" y="52" width="100" height="1.5" fill="#6a6a60"/>
<rect x="0" y="82.5" width="100" height="1.5" fill="#6a6a60"/>
<text x="50" y="68.5" text-anchor="middle" font-family="Liberation Sans" font-weight="bold" font-size="13.5" fill="#1e1e1e" letter-spacing="-0.2">DISTRICT</text>
<text x="50" y="76" text-anchor="middle" font-family="Liberation Sans" font-weight="bold" font-size="5.5" fill="#1e1e1e">MARKET</text>
<circle cx="33" cy="74" r="0.9" fill="#e8a020"/><circle cx="67" cy="74" r="0.9" fill="#e8a020"/>
<rect x="20" y="79" width="60" height="0.8" fill="#a8a890"/>
</svg></div>
<div class="thumb" style="left:936px;top:249.5px;width:134px;height:94.5px;background:#ef8838">
<svg style="left:0;top:0" width="134" height="95" viewBox="0 0 134 95">
<defs><radialGradient id="tan" cx="0.4" cy="0.35" r="0.7"><stop offset="0" stop-color="#ffa640"/><stop offset="1" stop-color="#ec7012"/></radialGradient>
<filter id="bl4"><feGaussianBlur stdDeviation="0.5"/></filter>
<linearGradient id="edg1" x1="0" y1="0" x2="1" y2="0.3"><stop offset="0" stop-color="#1e8ee0"/><stop offset="0.5" stop-color="#2ab8d8"/><stop offset="1" stop-color="#50d870"/></linearGradient>
<linearGradient id="edg2" x1="0" y1="0" x2="1" y2="1"><stop offset="0" stop-color="#1f7fe0"/><stop offset="1" stop-color="#0b4fa8"/></linearGradient></defs>
<rect x="0" y="0" width="63" height="47.5" fill="#f8bbb2"/>
<rect x="0" y="47.5" width="63" height="47.5" fill="#ef8a3a"/>
<text x="31.5" y="19.5" text-anchor="middle" font-family="Liberation Serif" font-size="8.2" fill="#c83232">Lana Park</text>
<text x="31.5" y="27.5" text-anchor="middle" font-family="Liberation Serif" font-size="8.2" fill="#c83232" textLength="56" lengthAdjust="spacingAndGlyphs">Farmer's Market</text>
<text x="31.5" y="62" text-anchor="middle" font-family="Liberation Sans" font-size="4" fill="#ffd8b8">VENDOR OUTREACH</text>
<text x="31.5" y="67" text-anchor="middle" font-family="Liberation Sans" font-size="4" fill="#ffd8b8">APRIL 2022</text>
<rect x="63" y="0" width="71" height="95" fill="#c04a1a"/>
<g filter="url(#bl4)">
<path d="M63 0H77L93 25L103 50L93 58L63 58Z" fill="#e4452c"/>
<g stroke="#8a1e12" stroke-width="1.3"><path d="M66 12L70 16M72 22L76 26M68 30L72 34M78 34L82 38M74 42L78 46M84 46L88 50M66 46L70 50M80 18L84 22"/></g>
<circle cx="82" cy="8" r="8" fill="url(#tan)"/><circle cx="95" cy="18" r="9" fill="url(#tan)"/><circle cx="69" cy="6" r="6" fill="url(#tan)"/><circle cx="115" cy="6" r="7" fill="url(#tan)"/><circle cx="120" cy="21" r="8" fill="url(#tan)"/><circle cx="112" cy="40" r="9" fill="url(#tan)"/><circle cx="106" cy="28" r="6" fill="url(#tan)"/><circle cx="66" cy="35" r="6" fill="url(#tan)"/><circle cx="73" cy="62" r="7" fill="url(#tan)"/><circle cx="79" cy="72" r="8" fill="url(#tan)"/><circle cx="88" cy="83" r="8" fill="url(#tan)"/><circle cx="71" cy="88" r="7" fill="url(#tan)"/><circle cx="106" cy="58" r="8" fill="url(#tan)"/><circle cx="96" cy="72" r="7" fill="url(#tan)"/><circle cx="131" cy="38" r="5" fill="url(#tan)"/><circle cx="129" cy="58" r="5" fill="url(#tan)"/><circle cx="101" cy="90" r="6" fill="url(#tan)"/><circle cx="131" cy="20" r="5" fill="url(#tan)"/><circle cx="123" cy="50" r="6" fill="url(#tan)"/><circle cx="91" cy="60" r="6" fill="url(#tan)"/>
<path d="M95 45L100 40L98 50ZM86 55L80 50L90 52ZM123 40L130 36L128 46ZM80 70L88 66L86 74ZM92 30L98 26L96 34Z" fill="#6a8a40"/>
</g>
<circle cx="123.5" cy="10.5" r="6.3" fill="#f6c89c"/>
<g transform="translate(118,79)">
<circle r="16.5" fill="#1a6fd2"/>
<path d="M-16.5 0A16.5 16.5 0 0 1 16.5 0C16.5 6 12 9 7 9C3 9 0 7 -1 4C-3 -1 -7 -2 -10 -1C-13 0 -15 1 -16.5 3Z" fill="url(#edg1)"/>
<ellipse cx="4" cy="5" rx="5.5" ry="4.8" fill="#f08a2a"/>
<path d="M-4 2C-4 9 1 14 8 14C11 14 14 12.5 15.5 11C12.5 15 7 16.5 1 16.5C-8 16.5 -14 10 -15 3C-11 0 -6 -1 -4 2Z" fill="#0c4ea8"/>
</g>
</svg></div><div class="thumb shadow" style="left:269px;top:451px;width:92px;height:122px">
<svg style="left:0;top:0" width="92" height="122" viewBox="0 0 92 122">
<defs><filter id="bl5"><feGaussianBlur stdDeviation="0.9"/></filter></defs>
<rect width="92" height="122" fill="#3e8a32"/>
<g filter="url(#bl5)">
<rect x="-2" y="-2" width="96" height="74" fill="#b8c890"/>
<path d="M-2 -2H60V30H-2Z" fill="#44726a"/>
<path d="M58 -2H94V22L70 18Z" fill="#3a9ae8"/>
<ellipse cx="8" cy="20" rx="9" ry="11" fill="#6ab84a"/>
<path d="M-2 32H26L24 66H-2Z" fill="#dcdca4"/>
<path d="M24 -2Q40 -4 56 4L55 20L30 22L26 12Z" fill="#2a2420"/>
<path d="M26 10L30 34L25 38Z" fill="#2a2420"/>
<ellipse cx="40" cy="19" rx="7" ry="9" fill="#9a6a4e"/>
<path d="M22 28Q30 22 36 28L40 60L50 60L58 40L60 68L24 68Z" fill="#ece6d6"/>
<path d="M35 32L45 32L46 60L36 60Z" fill="#b08048"/>
<path d="M48 10Q62 0 80 8L88 30L75 44L56 40L50 28Z" fill="#3a322e"/>
<ellipse cx="56" cy="34" rx="5" ry="7" fill="#7a5038"/>
<path d="M64 32L92 26L94 62L66 64L62 48Z" fill="#f0c030"/>
<path d="M60 62L72 64L56 94L48 92Z" fill="#8a5a40"/>
<path d="M80 60L92 60L92 80L62 88L58 82Z" fill="#8a5a40"/>
<path d="M30 62L45 65L40 72L28 70Z" fill="#9a6a4e"/>
<path d="M80 76L94 74V118L82 112Z" fill="#5a3038"/>
<ellipse cx="29.8" cy="77.8" rx="8.3" ry="3.8" transform="rotate(96 29.8 77.8)" fill="#3f8a32"/><ellipse cx="53.6" cy="117.3" rx="6.1" ry="3.8" transform="rotate(75 53.6 117.3)" fill="#7cc25a"/><ellipse cx="8.3" cy="92.1" rx="9.1" ry="3.9" transform="rotate(40 8.3 92.1)" fill="#2e6e26"/><ellipse cx="53.6" cy="73.2" rx="7.9" ry="3.7" transform="rotate(40 53.6 73.2)" fill="#4f9c3c"/><ellipse cx="79.0" cy="85.1" rx="5.7" ry="3.9" transform="rotate(56 79.0 85.1)" fill="#a8d88a"/><ellipse cx="62.7" cy="75.4" rx="7.9" ry="4.2" transform="rotate(18 62.7 75.4)" fill="#2e6e26"/><ellipse cx="5.8" cy="73.1" rx="6.0" ry="5.9" transform="rotate(77 5.8 73.1)" fill="#3f8a32"/><ellipse cx="42.8" cy="118.0" rx="6.8" ry="4.4" transform="rotate(32 42.8 118.0)" fill="#a8d88a"/><ellipse cx="22.5" cy="99.9" rx="7.6" ry="6.6" transform="rotate(131 22.5 99.9)" fill="#3f8a32"/><ellipse cx="56.0" cy="73.8" rx="7.6" ry="4.1" transform="rotate(62 56.0 73.8)" fill="#94d070"/><ellipse cx="38.8" cy="120.0" rx="5.4" ry="5.5" transform="rotate(142 38.8 120.0)" fill="#a8d88a"/><ellipse cx="28.9" cy="106.2" rx="8.0" ry="5.5" transform="rotate(82 28.9 106.2)" fill="#a8d88a"/><ellipse cx="8.6" cy="84.0" rx="8.5" ry="3.7" transform="rotate(132 8.6 84.0)" fill="#3f8a32"/><ellipse cx="59.5" cy="121.6" rx="9.1" ry="4.5" transform="rotate(69 59.5 121.6)" fill="#2e6e26"/><ellipse cx="31.9" cy="118.9" rx="6.8" ry="5.6" transform="rotate(89 31.9 118.9)" fill="#7cc25a"/><ellipse cx="70.7" cy="76.7" rx="6.2" ry="4.9" transform="rotate(157 70.7 76.7)" fill="#5fae48"/><ellipse cx="15.3" cy="90.9" rx="6.4" ry="4.0" transform="rotate(77 15.3 90.9)" fill="#4f9c3c"/><ellipse cx="25.6" cy="91.6" rx="6.8" ry="6.6" transform="rotate(172 25.6 91.6)" fill="#7cc25a"/><ellipse cx="7.6" cy="77.9" rx="8.3" ry="3.5" transform="rotate(150 7.6 77.9)" fill="#7cc25a"/><ellipse cx="24.2" cy="70.2" rx="7.1" ry="4.8" transform="rotate(102 24.2 70.2)" fill="#7cc25a"/><ellipse cx="63.5" cy="96.8" rx="8.1" ry="5.9" transform="rotate(10 63.5 96.8)" fill="#a8d88a"/><ellipse cx="71.8" cy="115.5" rx="9.0" ry="4.9" transform="rotate(72 71.8 115.5)" fill="#5fae48"/><ellipse cx="44.3" cy="90.8" rx="6.0" ry="6.9" transform="rotate(79 44.3 90.8)" fill="#5fae48"/><ellipse cx="31.3" cy="72.7" rx="5.0" ry="4.0" transform="rotate(18 31.3 72.7)" fill="#3f8a32"/><ellipse cx="56.5" cy="73.7" rx="6.0" ry="4.8" transform="rotate(114 56.5 73.7)" fill="#3f8a32"/><ellipse cx="55.4" cy="94.7" rx="5.6" ry="5.2" transform="rotate(176 55.4 94.7)" fill="#94d070"/><ellipse cx="44.5" cy="74.5" rx="5.5" ry="4.7" transform="rotate(48 44.5 74.5)" fill="#a8d88a"/><ellipse cx="63.7" cy="96.8" rx="6.0" ry="6.8" transform="rotate(65 63.7 96.8)" fill="#2e6e26"/><ellipse cx="50.0" cy="71.4" rx="7.6" ry="6.9" transform="rotate(155 50.0 71.4)" fill="#2e6e26"/><ellipse cx="77.8" cy="97.0" rx="9.5" ry="4.7" transform="rotate(40 77.8 97.0)" fill="#4f9c3c"/>
<ellipse cx="26" cy="70" rx="17" ry="6" fill="#b87040"/>
<circle cx="28" cy="67" r="4.5" fill="#7ac040"/>
<ellipse cx="79" cy="108" rx="12" ry="10" fill="#a8d890"/>
</g>
</svg></div>
<div class="a" style="left:441.5px;top:448px;width:95px;height:125px;background:#fdfdfd;border:1px solid #e6e6e6;box-shadow:0 1.5px 1.5px rgba(0,0,0,.28)"></div>
<svg style="left:452.5px;top:473px" width="74" height="71" viewBox="0 0 74 71">
<defs>
<linearGradient id="rhi" x1="0" y1="0" x2="0" y2="1"><stop offset="0" stop-color="#f57a86"/><stop offset="1" stop-color="#e03a4d"/></linearGradient>
<linearGradient id="ohi" x1="0" y1="0" x2="0" y2="1"><stop offset="0" stop-color="#fbb33a"/><stop offset="1" stop-color="#f37a12"/></linearGradient>
<linearGradient id="ghi" x1="0" y1="0" x2="0" y2="1"><stop offset="0" stop-color="#5fdc8a"/><stop offset="1" stop-color="#0bbf3a"/></linearGradient>
<linearGradient id="bhi" x1="0" y1="0" x2="0" y2="1"><stop offset="0" stop-color="#5fd2fb"/><stop offset="1" stop-color="#1592f5"/></linearGradient>
<linearGradient id="phi" x1="0" y1="0" x2="0" y2="1"><stop offset="0" stop-color="#eeeeee"/><stop offset="1" stop-color="#f7f7f7"/></linearGradient>
</defs>
<path d="M3 39H70L72 66H1Z" fill="url(#phi)"/>
<rect x="1" y="66" width="71" height="2.5" fill="#e2e2e2"/>
<g fill="#b8b8b8"><rect x="6" y="44" width="1.5" height="1"/><rect x="6" y="49" width="1.5" height="1"/><rect x="6" y="54" width="1.5" height="1"/><rect x="6" y="59" width="1.5" height="1"/><rect x="6" y="64" width="1.5" height="1"/></g>
<rect x="11" y="35" width="12.5" height="26.5" rx="1.5" fill="url(#rhi)"/>
<rect x="25" y="21.5" width="12.5" height="40" rx="1.5" fill="url(#ohi)"/>
<rect x="39" y="2.5" width="12.5" height="59" rx="1.5" fill="url(#ghi)"/>
<rect x="53" y="14" width="12.5" height="47.5" rx="1.5" fill="url(#bhi)"/>
<rect x="11" y="35" width="12.5" height="3" rx="1.5" fill="#fca0a8" opacity="0.8"/>
<rect x="25" y="21.5" width="12.5" height="3" rx="1.5" fill="#fdd070" opacity="0.8"/>
<rect x="39" y="2.5" width="12.5" height="3" rx="1.5" fill="#8ae8a8" opacity="0.8"/>
<rect x="53" y="14" width="12.5" height="3" rx="1.5" fill="#90e2fd" opacity="0.8"/>
</svg>
<div class="thumb" style="left:593.5px;top:506px;width:134px;height:75px;background:#e7a48b">
<svg style="left:0;top:0" width="134" height="75" viewBox="0 0 134 75">
<defs><linearGradient id="msk" x1="0" y1="0" x2="0" y2="1"><stop offset="0" stop-color="#6a70b0"/><stop offset="0.35" stop-color="#b88aa8"/><stop offset="0.62" stop-color="#f0a060"/><stop offset="0.75" stop-color="#f8c080"/><stop offset="1" stop-color="#6a3a20"/></linearGradient>
<filter id="bl6"><feGaussianBlur stdDeviation="0.9"/></filter>
<clipPath id="mclip"><rect x="6" y="5.7" width="122" height="63"/></clipPath></defs>
<rect x="6" y="5.7" width="122" height="63" fill="url(#msk)"/>
<g filter="url(#bl6)" clip-path="url(#mclip)">
<g transform="translate(6,5.7)">
<path d="M0 48H122V64H0Z" fill="#2e1c12"/>
<path d="M60 46Q70 40 80 46L80 64H58Z" fill="#3a2418"/>
<path d="M0 64L1 26L13 28L15 64Z" fill="#8a7252"/>
<path d="M21 64L22 36L29 36L30 64Z" fill="#6e5a40"/>
<path d="M33 56L34 38L40 38L41 56Z" fill="#5e4a34"/>
<path d="M56 64L58 22L78 22L80 64Z" fill="#86704e"/>
<path d="M62 64L64 24L70 24L69 64Z" fill="#9a8462" opacity="0.7"/>
<path d="M86 50L87 34L94 34L95 50Z" fill="#6e5a40"/>
<path d="M102 52L103 24L113 24L115 52Z" fill="#86704e"/>
<path d="M44 58L46 40L52 40L54 58Z" fill="#4a3826"/>
<g fill="#1c2016">
<ellipse cx="8" cy="10" rx="10" ry="7"/><ellipse cx="20" cy="17" rx="9" ry="6"/><ellipse cx="4" cy="22" rx="7" ry="5"/>
<ellipse cx="28" cy="28" rx="8" ry="6"/><ellipse cx="38" cy="24" rx="7" ry="5"/><ellipse cx="44" cy="32" rx="6" ry="4"/>
<ellipse cx="56" cy="8" rx="12" ry="7"/><ellipse cx="72" cy="5" rx="13" ry="7"/><ellipse cx="86" cy="10" rx="9" ry="6"/><ellipse cx="66" cy="16" rx="10" ry="5"/><ellipse cx="92" cy="20" rx="6" ry="4"/>
<ellipse cx="100" cy="12" rx="8" ry="6"/><ellipse cx="112" cy="8" rx="10" ry="7"/><ellipse cx="116" cy="18" rx="7" ry="5"/><ellipse cx="118" cy="34" rx="5" ry="4"/>
<ellipse cx="90" cy="30" rx="7" ry="5"/>
</g>
</g>
</g>
<text x="67.5" y="42" text-anchor="middle" font-family="Liberation Serif" font-weight="bold" font-size="13.5" fill="#ffffff" textLength="66" lengthAdjust="spacingAndGlyphs">Madagascar</text>
<text x="67" y="49" text-anchor="middle" font-family="Liberation Serif" font-weight="bold" font-size="4.2" fill="#f0f0f0">The Eighth Continent</text>
<text x="67" y="64.5" text-anchor="middle" font-family="Liberation Sans" font-weight="bold" font-size="2.8" fill="#e0e0e0">Rosie Thornton</text>
</svg></div>
<svg style="left:785px;top:455px" width="95" height="118" viewBox="0 0 95 118">
<defs><linearGradient id="pdfp" x1="0" y1="0" x2="0" y2="1"><stop offset="0" stop-color="#fafafa"/><stop offset="1" stop-color="#f0f0f0"/></linearGradient>
<linearGradient id="fold" x1="0" y1="0" x2="1" y2="1"><stop offset="0" stop-color="#f4f4f4"/><stop offset="1" stop-color="#d8d8d8"/></linearGradient></defs>
<path d="M3.5 0.5H65L90.5 26V117.5H3.5Z" fill="url(#pdfp)" stroke="#cfcfcf" stroke-width="1"/>
<path d="M65 0.5V22.5A3 3 0 0 0 68 25.5H90.5Z" fill="url(#fold)" stroke="#cfcfcf" stroke-width="0.8"/>
<g stroke="#d6d6d6" stroke-width="1"><path d="M11.5 12.5H56.5M11.5 21H56.5M11.5 29.5H82M11.5 38H82M11.5 46.5H82M11.5 105H82"/></g>
<rect x="0" y="54" width="94" height="43.5" fill="#e30613"/>
<rect x="0" y="95.5" width="94" height="2" fill="#b8050f"/>
<g font-family="Liberation Sans" font-size="31" fill="#ffffff" stroke="#ffffff" stroke-width="0.9"><text x="12.1" y="87.5">P</text><text x="36.7" y="87.5">D</text><text x="61.1" y="87.5">F</text></g>
</svg>
<div class="thumb shadow" style="left:955px;top:451px;width:92px;height:122px">
<svg style="left:0;top:0" width="92" height="122" viewBox="0 0 92 122">
<defs><filter id="bl7"><feGaussianBlur stdDeviation="0.9"/></filter>
<linearGradient id="nsky" x1="0" y1="0" x2="0" y2="1"><stop offset="0" stop-color="#dde6ee"/><stop offset="0.7" stop-color="#c8d6e2"/><stop offset="1" stop-color="#90a8c0"/></linearGradient>
<linearGradient id="nfield" x1="0" y1="0" x2="0" y2="1"><stop offset="0" stop-color="#9c9868"/><stop offset="0.3" stop-color="#7c8a4a"/><stop offset="1" stop-color="#4e6832"/></linearGradient></defs>
<rect width="92" height="122" fill="#6e8044"/>
<g filter="url(#bl7)">
<rect x="-2" y="-2" width="96" height="58" fill="url(#nsky)"/>
<path d="M36 -2H94V20L60 34L40 34Z" fill="#d2a6da"/>
<path d="M18 -2H46L36 34Z" fill="#ec94b0" opacity="0.9"/>
<path d="M-2 49L54 48L56 55H-2Z" fill="#3a5232"/>
<path d="M-2 54H94V124H-2Z" fill="url(#nfield)"/>
<g stroke="#b8b080" stroke-width="1.2" opacity="0.55" fill="none"><path d="M6 122L9 78M14 122L20 70M24 120L22 90M36 122L34 86M46 122L52 80M56 120L58 96M66 122L70 90M78 122L80 96M86 118L88 100M10 100L14 84M40 104L44 92"/></g><g stroke="#3e5a2a" stroke-width="1.4" opacity="0.5" fill="none"><path d="M2 122L5 92M18 122L16 96M30 122L31 100M50 122L48 98M62 122L64 104M74 122L72 102M90 122L88 96"/></g>
<path d="M55 112Q70 102 90 106L90 109Q72 105 56 114Z" fill="#d4cca4" opacity="0.8"/>
<path d="M40 36L52 38L62 28L76 16L94 2V70L76 78L58 52Z" fill="#e22a22"/>
<path d="M94 8Q82 20 70 36L82 58L94 56Z" fill="#f04834" opacity="0.8"/>
<path d="M33 33L52 38L76 78L70 78L50 44Z" fill="#e8586a" opacity="0.85"/>
<path d="M27 49Q33 45 38 50L41 83L26 85L24 62Z" fill="#d82022"/>
<circle cx="32" cy="45" r="3.6" fill="#3a2a22"/>
</g>
</svg></div>
<div class="thumb shadow" style="left:254px;top:672px;width:123px;height:91px;background:#030303">
<svg style="left:0;top:0" width="123" height="91" viewBox="0 0 123 91">
<defs><filter id="bl8"><feGaussianBlur stdDeviation="1.6"/></filter><filter id="bl8b"><feGaussianBlur stdDeviation="0.9"/></filter>
<linearGradient id="nsk" x1="0" y1="0" x2="1" y2="0"><stop offset="0" stop-color="#101412"/><stop offset="0.3" stop-color="#4e5c54"/><stop offset="0.6" stop-color="#5a6a60"/><stop offset="0.85" stop-color="#141816"/><stop offset="1" stop-color="#030303"/></linearGradient></defs>
<g filter="url(#bl8)">
<path d="M18 -3H125V28Q95 25 80 21Q55 16 30 9Z" fill="url(#nsk)"/>
<path d="M40 2Q60 0 85 4L88 14Q70 12 45 8Z" fill="#7c8a7e" opacity="0.45"/>
</g>
<g filter="url(#bl8b)">
<ellipse cx="44" cy="25" rx="4.5" ry="6.5" fill="#e0862e"/>
<path d="M38 22Q42 16 48 19L45 24Z" fill="#3a200c"/>
<path d="M31 38Q40 32 52 36L55 50L68 54L66 58L48 56L33 48Z" fill="#b81a14"/>
<path d="M40 38L50 38L54 50L46 52Z" fill="#e8281e"/>
<ellipse cx="67" cy="56" rx="4.5" ry="2.5" fill="#ffb868"/>
</g>
</svg></div>
<div class="a" style="left:441.5px;top:638.5px;width:95px;height:125px;background:#fdfdfd;border:1px solid #e6e6e6;box-shadow:0 1.5px 1.5px rgba(0,0,0,.28)"></div>
<svg style="left:452.5px;top:663.5px" width="74" height="71" viewBox="0 0 74 71">
<defs>
<linearGradient id="rpe" x1="0" y1="0" x2="0" y2="1"><stop offset="0" stop-color="#f57a86"/><stop offset="1" stop-color="#e03a4d"/></linearGradient>
<linearGradient id="ope" x1="0" y1="0" x2="0" y2="1"><stop offset="0" stop-color="#fbb33a"/><stop offset="1" stop-color="#f37a12"/></linearGradient>
<linearGradient id="gpe" x1="0" y1="0" x2="0" y2="1"><stop offset="0" stop-color="#5fdc8a"/><stop offset="1" stop-color="#0bbf3a"/></linearGradient>
<linearGradient id="bpe" x1="0" y1="0" x2="0" y2="1"><stop offset="0" stop-color="#5fd2fb"/><stop offset="1" stop-color="#1592f5"/></linearGradient>
<linearGradient id="ppe" x1="0" y1="0" x2="0" y2="1"><stop offset="0" stop-color="#eeeeee"/><stop offset="1" stop-color="#f7f7f7"/></linearGradient>
</defs>
<path d="M3 39H70L72 66H1Z" fill="url(#ppe)"/>
<rect x="1" y="66" width="71" height="2.5" fill="#e2e2e2"/>
<g fill="#b8b8b8"><rect x="6" y="44" width="1.5" height="1"/><rect x="6" y="49" width="1.5" height="1"/><rect x="6" y="54" width="1.5" height="1"/><rect x="6" y="59" width="1.5" height="1"/><rect x="6" y="64" width="1.5" height="1"/></g>
<rect x="11" y="35" width="12.5" height="26.5" rx="1.5" fill="url(#rpe)"/>
<rect x="25" y="21.5" width="12.5" height="40" rx="1.5" fill="url(#ope)"/>
<rect x="39" y="2.5" width="12.5" height="59" rx="1.5" fill="url(#gpe)"/>
<rect x="53" y="14" width="12.5" height="47.5" rx="1.5" fill="url(#bpe)"/>
<rect x="11" y="35" width="12.5" height="3" rx="1.5" fill="#fca0a8" opacity="0.8"/>
<rect x="25" y="21.5" width="12.5" height="3" rx="1.5" fill="#fdd070" opacity="0.8"/>
<rect x="39" y="2.5" width="12.5" height="3" rx="1.5" fill="#8ae8a8" opacity="0.8"/>
<rect x="53" y="14" width="12.5" height="3" rx="1.5" fill="#90e2fd" opacity="0.8"/>
</svg>
<div class="thumb" style="left:593px;top:696px;width:134px;height:75px">
<svg style="left:0;top:0" width="134" height="75" viewBox="0 0 134 75">
<defs><filter id="bl9"><feGaussianBlur stdDeviation="2.2"/></filter><filter id="bl9b"><feGaussianBlur stdDeviation="1"/></filter>
<linearGradient id="wv" x1="0" y1="0" x2="1" y2="0"><stop offset="0" stop-color="#dfeaf2"/><stop offset="0.45" stop-color="#b8d4e8"/><stop offset="1" stop-color="#a8c8e4"/></linearGradient>
<linearGradient id="wface" x1="0" y1="0" x2="1" y2="1"><stop offset="0" stop-color="#2a8aa8"/><stop offset="0.5" stop-color="#1e6a94"/><stop offset="1" stop-color="#154e78"/></linearGradient></defs>
<rect width="134" height="75" fill="url(#wv)"/>
<g filter="url(#bl9)">
<path d="M50 60Q60 20 90 12Q115 8 138 20V80H40Z" fill="url(#wface)"/>
<path d="M55 62Q65 40 85 38Q110 40 138 60V80H50Z" fill="#3aa6a8" opacity="0.75"/>
<path d="M-4 64Q50 58 138 64V80H-4Z" fill="#1c4c66"/>
<ellipse cx="20" cy="30" rx="28" ry="26" fill="#e8f0f6" opacity="0.85"/>
</g>
<g filter="url(#bl9b)">
<path d="M72 16Q95 6 120 12Q130 16 136 22L134 26Q120 18 100 18Q85 20 74 22Z" fill="#e8f2fa" opacity="0.5"/>
</g>
<g font-family="Liberation Sans" font-weight="bold" fill="#3b1fe6">
<text x="14" y="16.5" font-size="23" textLength="60" lengthAdjust="spacingAndGlyphs">EXPLORING</text>
<text x="56" y="33.7" font-size="22" textLength="30" lengthAdjust="spacingAndGlyphs">FORM</text>
<text x="27.4" y="51.5" font-size="23" textLength="50" lengthAdjust="spacingAndGlyphs">THROUGH</text>
<text x="14" y="69.3" font-size="23" textLength="53.5" lengthAdjust="spacingAndGlyphs">FUNCTION</text>
</g>
<text x="21.6" y="29.5" font-family="Liberation Sans" font-weight="bold" font-size="10.2" fill="#f4f436" textLength="32.5" lengthAdjust="spacingAndGlyphs">CUSTOM SHAPES</text>
<rect x="68.7" y="59.2" width="65.3" height="3" fill="#e838c8"/>
</svg></div>
<div class="thumb shadow" style="left:769px;top:682px;width:122px;height:82px">
<svg style="left:0;top:0" width="122" height="82" viewBox="0 0 122 82">
<defs><filter id="bl10"><feGaussianBlur stdDeviation="1"/></filter><filter id="bl10b"><feGaussianBlur stdDeviation="0.6"/></filter>
<linearGradient id="ssky" x1="0" y1="0" x2="0" y2="1"><stop offset="0" stop-color="#b2bec8"/><stop offset="0.3" stop-color="#c6c8ca"/><stop offset="0.55" stop-color="#e6c8aa"/><stop offset="0.85" stop-color="#f0aa6c"/><stop offset="1" stop-color="#e89a5e"/></linearGradient>
<linearGradient id="ssea" x1="0" y1="0" x2="0" y2="1"><stop offset="0" stop-color="#b8c0c8"/><stop offset="0.4" stop-color="#8a98a4"/><stop offset="1" stop-color="#6e7a86"/></linearGradient>
<radialGradient id="sun" cx="0.5" cy="0.5" r="0.5"><stop offset="0" stop-color="#fad8b0"/><stop offset="1" stop-color="#fad8b0" stop-opacity="0"/></radialGradient></defs>
<rect width="122" height="51" fill="url(#ssky)"/>
<ellipse cx="72" cy="34" rx="34" ry="18" fill="url(#sun)"/>
<g filter="url(#bl10)">
<path d="M-2 50Q8 42 18 43L30 50Z" fill="#6e6a72"/>
<rect x="-2" y="50" width="126" height="34" fill="url(#ssea)"/>
<path d="M-2 53Q30 51 60 55Q90 57 124 53V57Q90 60 60 58Q30 56 -2 58Z" fill="#d0d8de" opacity="0.6"/>
<path d="M40 64Q60 60 100 66L100 68Q60 63 40 67Z" fill="#e0c0a0" opacity="0.6"/>
<path d="M-2 70Q30 66 60 72Q90 76 124 70V84H-2Z" fill="#5a6672" opacity="0.6"/>
<path d="M40 80Q60 76 82 82Z" fill="#c89878" opacity="0.6"/>
</g>
<g filter="url(#bl10b)">
<path d="M42 30Q43 24 49 24Q55 25 56 31L56 35L54 37L53 42L47 44L42 40Z" fill="#262628"/>
<path d="M28 60Q29 46 35 41Q42 37 47 40L50 48L49 60Z" fill="#1c1e22"/>
<path d="M70 60Q80 54 90 44L91 47Q85 58 74 62Z" fill="#eef0f2"/>
</g>
</svg></div>
<div class="a" style="left:955.5px;top:638.5px;width:95px;height:125px;background:#fdfdfd;border:1px solid #e6e6e6;box-shadow:0 1.5px 1.5px rgba(0,0,0,.28)"></div>
<svg style="left:966.5px;top:663.5px" width="74" height="71" viewBox="0 0 74 71">
<defs>
<linearGradient id="rtp" x1="0" y1="0" x2="0" y2="1"><stop offset="0" stop-color="#f57a86"/><stop offset="1" stop-color="#e03a4d"/></linearGradient>
<linearGradient id="otp" x1="0" y1="0" x2="0" y2="1"><stop offset="0" stop-color="#fbb33a"/><stop offset="1" stop-color="#f37a12"/></linearGradient>
<linearGradient id="gtp" x1="0" y1="0" x2="0" y2="1"><stop offset="0" stop-color="#5fdc8a"/><stop offset="1" stop-color="#0bbf3a"/></linearGradient>
<linearGradient id="btp" x1="0" y1="0" x2="0" y2="1"><stop offset="0" stop-color="#5fd2fb"/><stop offset="1" stop-color="#1592f5"/></linearGradient>
<linearGradient id="ptp" x1="0" y1="0" x2="0" y2="1"><stop offset="0" stop-color="#eeeeee"/><stop offset="1" stop-color="#f7f7f7"/></linearGradient>
</defs>
<path d="M3 39H70L72 66H1Z" fill="url(#ptp)"/>
<rect x="1" y="66" width="71" height="2.5" fill="#e2e2e2"/>
<g fill="#b8b8b8"><rect x="6" y="44" width="1.5" height="1"/><rect x="6" y="49" width="1.5" height="1"/><rect x="6" y="54" width="1.5" height="1"/><rect x="6" y="59" width="1.5" height="1"/><rect x="6" y="64" width="1.5" height="1"/></g>
<rect x="11" y="35" width="12.5" height="26.5" rx="1.5" fill="url(#rtp)"/>
<rect x="25" y="21.5" width="12.5" height="40" rx="1.5" fill="url(#otp)"/>
<rect x="39" y="2.5" width="12.5" height="59" rx="1.5" fill="url(#gtp)"/>
<rect x="53" y="14" width="12.5" height="47.5" rx="1.5" fill="url(#btp)"/>
<rect x="11" y="35" width="12.5" height="3" rx="1.5" fill="#fca0a8" opacity="0.8"/>
<rect x="25" y="21.5" width="12.5" height="3" rx="1.5" fill="#fdd070" opacity="0.8"/>
<rect x="39" y="2.5" width="12.5" height="3" rx="1.5" fill="#8ae8a8" opacity="0.8"/>
<rect x="53" y="14" width="12.5" height="3" rx="1.5" fill="#90e2fd" opacity="0.8"/>
</svg>
<!-- ============ STATUS ============ -->
<div class="a" style="left:-1px;top:795px;width:1129px;height:33px;background:#fff"></div>
<div class="t" style="left:22px;top:803.9px;font-size:16px;color:#3b3b3b">15 items</div>
<div class="a" style="left:100px;top:803px;width:1px;height:16px;background:#e6e6e6"></div>
<div class="a" style="left:1064px;top:799px;width:21px;height:22px;background:#f7f7f7;border-radius:3px"></div>
<svg style="left:1066px;top:801px" width="18" height="17" viewBox="0 0 18 17"><path d="M0.5 1.5H17.5M0.5 6H17.5M0.5 10.5H17.5M0.5 15.3H17.5" stroke="#2b2b2b" stroke-width="1.2"/><path d="M0.5 6H17.5" stroke="#6a6a6a" stroke-width="1.2"/></svg>
<div class="a" style="left:1091px;top:794.5px;width:30.5px;height:32px;background:#cfe7f5;border:1.5px solid #62b7e6"></div>
<svg style="left:1098px;top:803px" width="19" height="19" viewBox="0 0 19 19"><rect x="1.2" y="1" width="16" height="13.3" rx="2" fill="none" stroke="#1f1f1f" stroke-width="1.4"/><path d="M1.2 17.3H17.2" stroke="#555" stroke-width="1.2"/></svg>

</div>
<div id="frame"></div>
</body></html>
